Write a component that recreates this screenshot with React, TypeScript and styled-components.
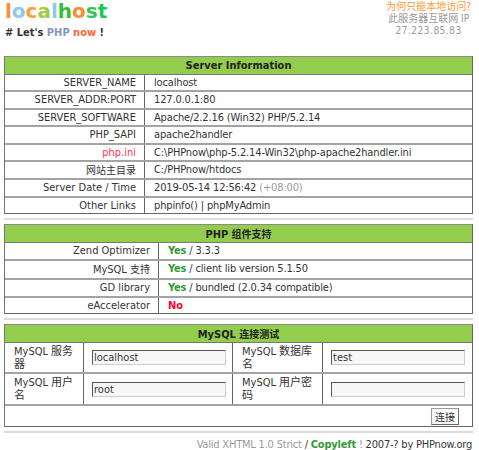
import React from "react";
import styled, { createGlobalStyle } from "styled-components";

const GlobalStyle = createGlobalStyle`
  html, body { margin: 0; padding: 0; background: #fff; }
  body {
    font-family: "DejaVu Sans Condensed", "DejaVu Sans", "Noto Sans CJK SC", sans-serif;
    font-size: 11px;
    color: #333;
  }
`;

const Page = styled.div`
  width: 469px;
  margin-left: 4px;
`;

const Top = styled.header`
  display: flex;
  justify-content: space-between;
  align-items: flex-start;
  height: 56px;
`;

const Brand = styled.div`
  padding-left: 1px;
`;

const Logo = styled.h1`
  margin: 0;
  font-family: "DejaVu Sans", sans-serif;
  font-weight: bold;
  font-size: 20px;
  line-height: 22px;
`;

const Letter = styled.span<{ $c: string }>`
  color: ${(p) => p.$c};
`;

const Slogan = styled.div`
  margin-top: 3px;
  font-weight: bold;
  line-height: 16px;
  color: #333;
`;

const Php = styled.span`
  color: #8892bf;
`;

const Now = styled.span`
  color: #ff6633;
`;

const Remote = styled.div`
  margin-top: 1px;
  margin-right: 2px;
  text-align: center;
  font-size: 10px;
  line-height: 12px;
  color: #999;
`;

const Why = styled.div`
  color: #ff9933;
`;

const Ip = styled.div`
  letter-spacing: 0.5px;
`;

const Zh = styled.span`
  font-family: "Noto Sans CJK SC", sans-serif;
  font-size: 10px;
`;

const Table = styled.section`
  border: 1px solid #666;
  border-top-color: #8a8a8a;
  border-left-color: #777;
`;

const Head = styled.div<{ $h: number }>`
  background: #93cd4d;
  text-align: center;
  font-weight: bold;
  color: #222;
  height: ${(p) => p.$h}px;
  line-height: ${(p) => p.$h}px;
  border-bottom: 1px solid #777;
`;

const Row = styled.div<{ $cols: string; $h: number }>`
  display: grid;
  grid-template-columns: ${(p) => p.$cols};
  line-height: ${(p) => p.$h}px;
  & + & {
    border-top: 2px solid #a3a3a3;
  }
`;

const Label = styled.div<{ $red?: boolean }>`
  text-align: right;
  padding-right: 8px;
  border-right: 1px solid #666;
  color: ${(p) => (p.$red ? "#ff3355" : "#333")};
`;

const Value = styled.div`
  padding-left: 9px;
  color: #333;
  letter-spacing: -0.15px;
`;

const Muted = styled.span`
  color: #999;
`;

const Yes = styled.b`
  color: #339933;
`;

const No = styled.b`
  color: #ff0033;
`;

const Rule = styled.div`
  height: 2px;
  background: #dcdcdc;
  margin: 4px 0 4px;
`;

const FormRow = styled.div<{ $h: number }>`
  display: grid;
  grid-template-columns: 79px 149px 90px 1fr;
  height: ${(p) => p.$h}px;
  & + & {
    border-top: 2px solid #a3a3a3;
  }
`;

const FieldLabel = styled.div`
  display: flex;
  align-items: center;
  padding: 0 7px 0 9px;
  line-height: 13px;
  border-right: 1px solid #666;
  color: #333;
`;

const FieldCell = styled.div<{ $last?: boolean }>`
  display: flex;
  align-items: center;
  padding-left: 8px;
  border-right: ${(p) => (p.$last ? "none" : "1px solid #666")};
`;

const Input = styled.input`
  box-sizing: border-box;
  width: 134px;
  height: 15px;
  padding: 0 1px;
  margin: 0;
  font: inherit;
  font-size: 11px;
  color: #333;
  background: #f7f7f7;
  border: 1px solid #ccc;
  border-top-color: #555;
  border-left-color: #555;
  outline: none;
`;

const ActionRow = styled.div`
  display: flex;
  justify-content: flex-end;
  align-items: center;
  height: 20px;
  padding-right: 13px;
  border-top: 2px solid #a3a3a3;
`;

const Button = styled.button`
  box-sizing: border-box;
  width: 28px;
  height: 17px;
  padding: 0;
  margin: 0;
  background: #fafafa;
  border: 1px solid #666;
  border-top-color: #999;
  border-left-color: #999;
  color: #333;
  font-family: "Noto Sans CJK SC", sans-serif;
  font-size: 10px;
  line-height: 15px;
`;

const Footer = styled.footer`
  margin-top: 5px;
  text-align: right;
  line-height: 14px;
  color: #999;
  padding-right: 1px;
  letter-spacing: -0.2px;
`;

const Dark = styled.span`
  color: #333;
`;

const Green = styled.b`
  color: #339933;
`;

const logo: [string, string][] = [
  ["l", "#ff8c3a"],
  ["o", "#8ccaf2"],
  ["c", "#ff9f3a"],
  ["a", "#a2cc3e"],
  ["l", "#8ccaf2"],
  ["h", "#2fbf35"],
  ["o", "#ff8c30"],
  ["s", "#32c660"],
  ["t", "#22c84c"],
];

const COLS1 = "140px 1fr";
const COLS2 = "154px 1fr";

export default function App() {
  return (
    <Page>
      <GlobalStyle />
      <Top>
        <Brand>
          <Logo>
            {logo.map(([ch, c], i) => (
              <Letter key={i} $c={c}>
                {ch}
              </Letter>
            ))}
          </Logo>
          <Slogan>
            # Let's <Php>PHP</Php> <Now>now</Now> !
          </Slogan>
        </Brand>
        <Remote>
          <Why>为何只能本地访问?</Why>
          <div>此服务器互联网 IP</div>
          <Ip>27.223.85.83</Ip>
        </Remote>
      </Top>

      <Table>
        <Head $h={17}>Server Information</Head>
        <Row $cols={COLS1} $h={15.4}>
          <Label>SERVER_NAME</Label>
          <Value>localhost</Value>
        </Row>
        <Row $cols={COLS1} $h={15.4}>
          <Label>SERVER_ADDR:PORT</Label>
          <Value>127.0.0.1:80</Value>
        </Row>
        <Row $cols={COLS1} $h={15.4}>
          <Label>SERVER_SOFTWARE</Label>
          <Value>Apache/2.2.16 (Win32) PHP/5.2.14</Value>
        </Row>
        <Row $cols={COLS1} $h={15.4}>
          <Label>PHP_SAPI</Label>
          <Value>apache2handler</Value>
        </Row>
        <Row $cols={COLS1} $h={15.4}>
          <Label $red>php.ini</Label>
          <Value>C:\PHPnow\php-5.2.14-Win32\php-apache2handler.ini</Value>
        </Row>
        <Row $cols={COLS1} $h={15.4}>
          <Label>
            <Zh>网站主目录</Zh>
          </Label>
          <Value>C:/PHPnow/htdocs</Value>
        </Row>
        <Row $cols={COLS1} $h={15.4}>
          <Label>Server Date / Time</Label>
          <Value>
            2019-05-14 12:56:42 <Muted>(+08:00)</Muted>
          </Value>
        </Row>
        <Row $cols={COLS1} $h={15.4}>
          <Label>Other Links</Label>
          <Value>phpinfo() | phpMyAdmin</Value>
        </Row>
      </Table>
      <Rule />

      <Table>
        <Head $h={17}>
          PHP <Zh>组件支持</Zh>
        </Head>
        <Row $cols={COLS2} $h={15.75}>
          <Label>Zend Optimizer</Label>
          <Value>
            <Yes>Yes</Yes> / 3.3.3
          </Value>
        </Row>
        <Row $cols={COLS2} $h={15.75}>
          <Label>
            MySQL <Zh>支持</Zh>
          </Label>
          <Value>
            <Yes>Yes</Yes> / client lib version 5.1.50
          </Value>
        </Row>
        <Row $cols={COLS2} $h={15.75}>
          <Label>GD library</Label>
          <Value>
            <Yes>Yes</Yes> / bundled (2.0.34 compatible)
          </Value>
        </Row>
        <Row $cols={COLS2} $h={15.75}>
          <Label>eAccelerator</Label>
          <Value>
            <No>No</No>
          </Value>
        </Row>
      </Table>
      <Rule />

      <Table>
        <Head $h={17}>
          MySQL <Zh>连接测试</Zh>
        </Head>
        <FormRow $h={29}>
          <FieldLabel>MySQL 服务器</FieldLabel>
          <FieldCell>
            <Input defaultValue="localhost" />
          </FieldCell>
          <FieldLabel>MySQL 数据库名</FieldLabel>
          <FieldCell $last>
            <Input defaultValue="test" />
          </FieldCell>
        </FormRow>
        <FormRow $h={30}>
          <FieldLabel>MySQL 用户名</FieldLabel>
          <FieldCell>
            <Input defaultValue="root" />
          </FieldCell>
          <FieldLabel>MySQL 用户密码</FieldLabel>
          <FieldCell $last>
            <Input type="password" defaultValue="" />
          </FieldCell>
        </FormRow>
        <ActionRow>
          <Button>连接</Button>
        </ActionRow>
      </Table>
      <Rule />

      <Footer>
        Valid XHTML 1.0 Strict <Dark>/</Dark> <Green>Copyleft</Green> !{" "}
        <Dark>2007-? by PHPnow.org</Dark>
      </Footer>
    </Page>
  );
}
